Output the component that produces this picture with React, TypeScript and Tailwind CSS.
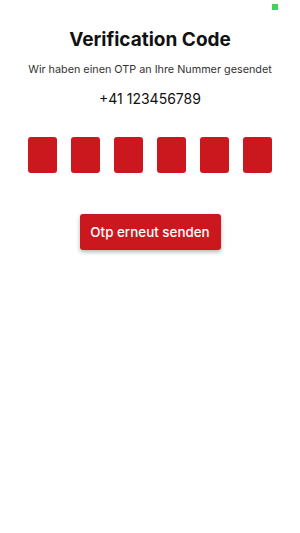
import React from "react";

export default function App() {
  return (
    <div
      className="relative w-[300px] h-[533px] bg-white flex flex-col items-center"
      style={{ fontFamily: "Inter, Roboto, 'Noto Sans', sans-serif" }}
    >
      <div className="absolute left-[272px] top-[4px] w-[6px] h-[6px] bg-[#3fd45a]" />
      <h1 className="mt-[28px] text-[19px] leading-[24px] font-bold text-[#111]">
        Verification Code
      </h1>
      <p className="mt-[11px] text-[10.8px] leading-[14px] text-[#333]">
        Wir haben einen OTP an Ihre Nummer gesendet
      </p>
      <p className="mt-[13px] text-[14px] leading-[18px] text-[#111]">
        +41 123456789
      </p>
      <div className="mt-[29px] flex gap-[14px]">
        {[0, 1, 2, 3, 4, 5].map((i) => (
          <div
            key={i}
            className="w-[29px] h-[36px] rounded-[3px] bg-[#cb181e]"
          />
        ))}
      </div>
      <button className="mt-[41px] w-[141px] h-[36px] rounded-[3px] bg-[#cb181e] text-white text-[13.4px] font-medium shadow-[0_2px_4px_rgba(0,0,0,0.3)]">
        Otp erneut senden
      </button>
    </div>
  );
}
